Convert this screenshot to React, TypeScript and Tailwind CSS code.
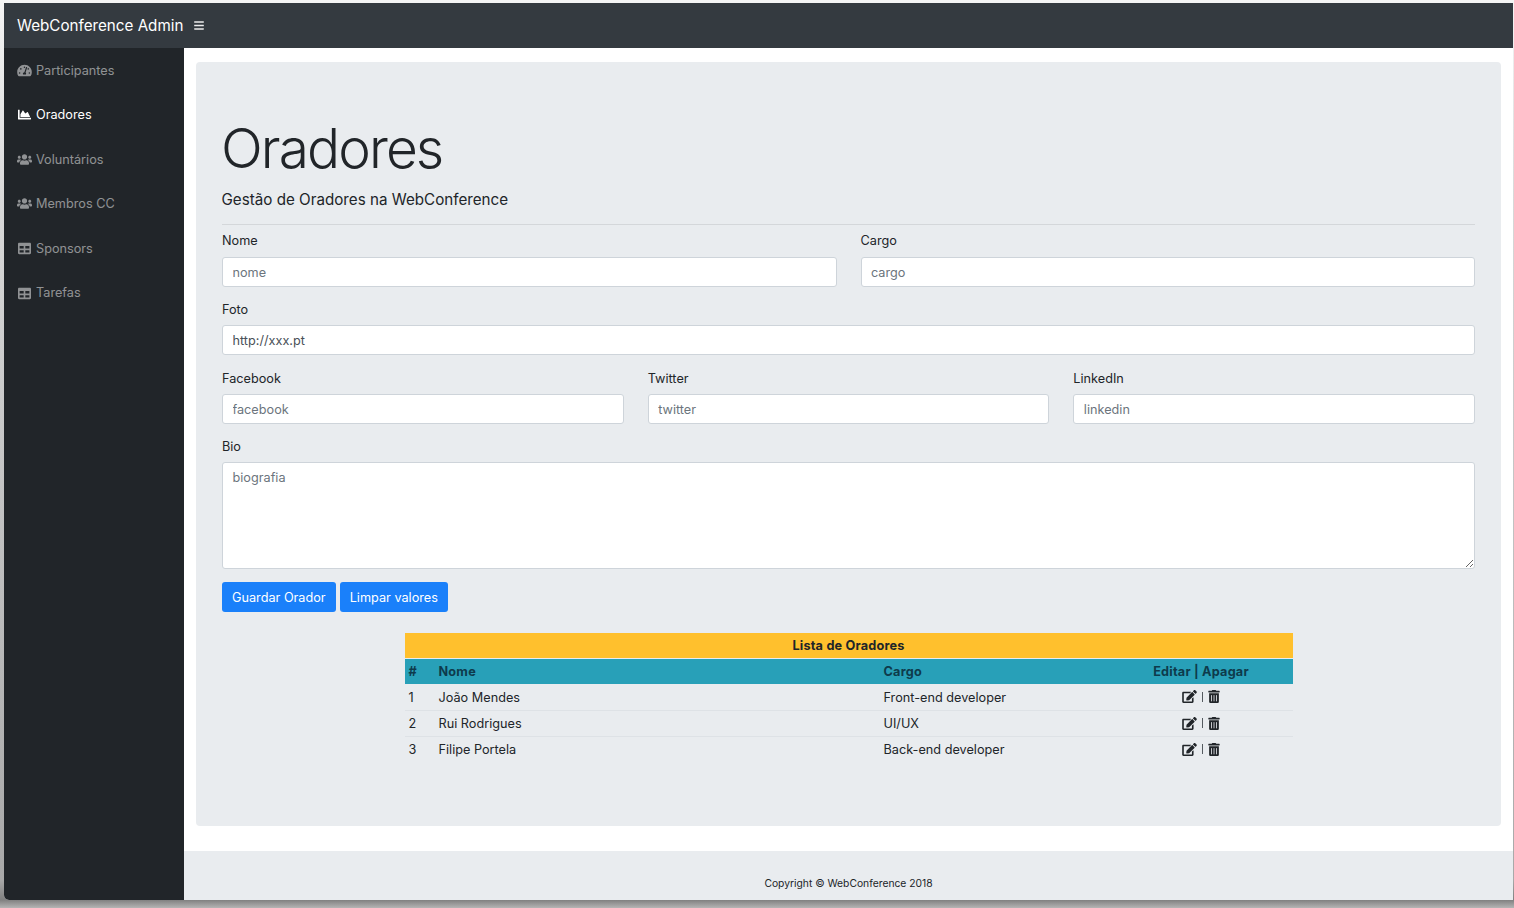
import { FaTachometerAlt, FaChartArea, FaUsers, FaTable, FaEdit, FaTrashAlt, FaBars } from "react-icons/fa";

const nav = [
  { label: "Participantes", Icon: FaTachometerAlt },
  { label: "Oradores", Icon: FaChartArea, active: true },
  { label: "Voluntários", Icon: FaUsers },
  { label: "Membros CC", Icon: FaUsers },
  { label: "Sponsors", Icon: FaTable },
  { label: "Tarefas", Icon: FaTable },
];

const rows = [
  ["1", "João Mendes", "Front-end developer"],
  ["2", "Rui Rodrigues", "UI/UX"],
  ["3", "Filipe Portela", "Back-end developer"],
];

const inputCls =
  "block w-full h-[30px] px-[9.5px] bg-white border border-[#ced4da] rounded-[3px] text-[12.7px] text-[#495057] placeholder:text-[#6c757d] outline-none";

function Field({ label, placeholder, value, className = "", labelClassName = "mb-[6px]" }: { label: string; placeholder?: string; value?: string; className?: string; labelClassName?: string }) {
  return (
    <div className={`min-w-0 ${className}`}>
      <label className={`block text-[12.7px] leading-[19px] text-[#212529] ${labelClassName}`}>{label}</label>
      <input className={inputCls} placeholder={placeholder} defaultValue={value} />
    </div>
  );
}

export default function App() {
  return (
    <div className="h-[908px] w-[1514px] overflow-hidden bg-[linear-gradient(to_bottom,#f4f4f4_0,#f4f4f4_3px,#d8d8d8_200px,#a8a8a8_880px,#808080_900px,#b4b4b4_908px)] pl-[4px] pr-px pt-[3px] pb-[8px] font-['Inter','Liberation_Sans',sans-serif] text-[#212529]">
      <div className="flex h-full flex-col overflow-hidden rounded-bl-[5px] bg-white">
        <header className="flex h-[45px] shrink-0 items-center bg-[#343a40] pl-[13px]">
          <span className="text-[15.2px] leading-none text-white">WebConference Admin</span>
          <FaBars className="ml-[11px] h-[11px] w-[10px] text-white/90" />
        </header>
        <div className="flex min-h-0 flex-1">
          <aside className="w-[180px] shrink-0 bg-[#212529]">
            {nav.map(({ label, Icon, active }) => (
              <div key={label} className={`flex h-[44.55px] items-center text-[12.7px] ${active ? "text-white" : "text-white/50"}`}>
                <span className="flex w-[32px] shrink-0 justify-end pr-[4px]">
                  <Icon className="h-[13px] w-[15px]" />
                </span>
                <span>{label}</span>
              </div>
            ))}
          </aside>
          <main className="flex min-w-0 flex-1 flex-col">
            <div className="flex-1 px-[12px] pt-[14px]">
              <section className="h-[764px] rounded-[4px] bg-[#e9ecef] px-[26px] pt-[50px]">
                <h1 className="-ml-[1px] text-[55px] font-light leading-[72px] tracking-[-1.9px] text-[#212529]">Oradores</h1>
                <p className="mt-[4px] -ml-[0.5px] text-[15.2px] leading-[24px]">Gestão de Oradores na WebConference</p>
                <hr className="mt-[12px] mb-[6px] border-t border-[#d4d7da]" />
                <div className="grid grid-cols-2 gap-x-[24px]">
                  <Field label="Nome" placeholder="nome" labelClassName="mb-[7px]" />
                  <Field label="Cargo" placeholder="cargo" labelClassName="mb-[7px]" />
                </div>
                <Field label="Foto" value="http://xxx.pt" className="mt-[13px]" />
                <div className="mt-[14px] grid grid-cols-3 gap-x-[24px]">
                  <Field label="Facebook" placeholder="facebook" />
                  <Field label="Twitter" placeholder="twitter" />
                  <Field label="LinkedIn" placeholder="linkedin" />
                </div>
                <div className="mt-[13px]">
                  <label className="mb-[6px] block text-[12.7px] leading-[19px]">Bio</label>
                  <textarea className="block h-[107px] w-full rounded-[3px] border border-[#ced4da] bg-white px-[9.5px] py-[5px] text-[12.7px] text-[#495057] outline-none placeholder:text-[#6c757d]" placeholder="biografia" />
                </div>
                <div className="mt-[13px] flex gap-[4px]">
                  <button className="h-[30px] rounded-[3px] bg-[#1a80fa] px-[10px] pt-[1px] text-[12.7px] text-white">Guardar Orador</button>
                  <button className="h-[30px] rounded-[3px] bg-[#1a80fa] px-[10px] pt-[1px] text-[12.7px] text-white">Limpar valores</button>
                </div>
                <table className="mx-auto mt-[21px] w-[888px] table-fixed border-collapse text-[12.7px]">
                  <colgroup>
                    <col className="w-[34px]" />
                    <col className="w-[445px]" />
                    <col className="w-[230px]" />
                    <col />
                  </colgroup>
                  <thead className="font-bold tracking-[0.2px]">
                    <tr className="h-[25px] bg-[#ffc02d]">
                      <th colSpan={4} className="pt-[1px] text-center">Lista de Oradores</th>
                    </tr>
                    <tr className="h-[26px] border-t border-[#e9ecef] bg-[#28a0b8] text-[#0e3b4c]">
                      <th className="pl-[4px] text-left">#</th>
                      <th className="text-left">Nome</th>
                      <th className="text-left">Cargo</th>
                      <th className="pr-[4px] text-center">Editar | Apagar</th>
                    </tr>
                  </thead>
                  <tbody>
                    {rows.map(([n, name, role]) => (
                      <tr key={n} className="h-[26px] border-b border-[#dee2e6] last:border-transparent">
                        <td className="pl-[4px] pt-[1px]">{n}</td>
                        <td className="pt-[1px]">{name}</td>
                        <td className="pt-[1px]">{role}</td>
                        <td className="pr-[4px]">
                          <div className="flex items-center justify-center gap-[5px]">
                            <FaEdit className="h-[13px] w-[15px]" />
                            <span className="h-[10px] w-px bg-[#555b60]" />
                            <FaTrashAlt className="h-[13px] w-[12px]" />
                          </div>
                        </td>
                      </tr>
                    ))}
                  </tbody>
                </table>
              </section>
            </div>
            <footer className="flex h-[49px] shrink-0 items-end justify-center bg-[#e9ecef] pb-[10px] text-[10.3px] leading-[13px]">
              Copyright © WebConference 2018
            </footer>
          </main>
        </div>
      </div>
    </div>
  );
}
